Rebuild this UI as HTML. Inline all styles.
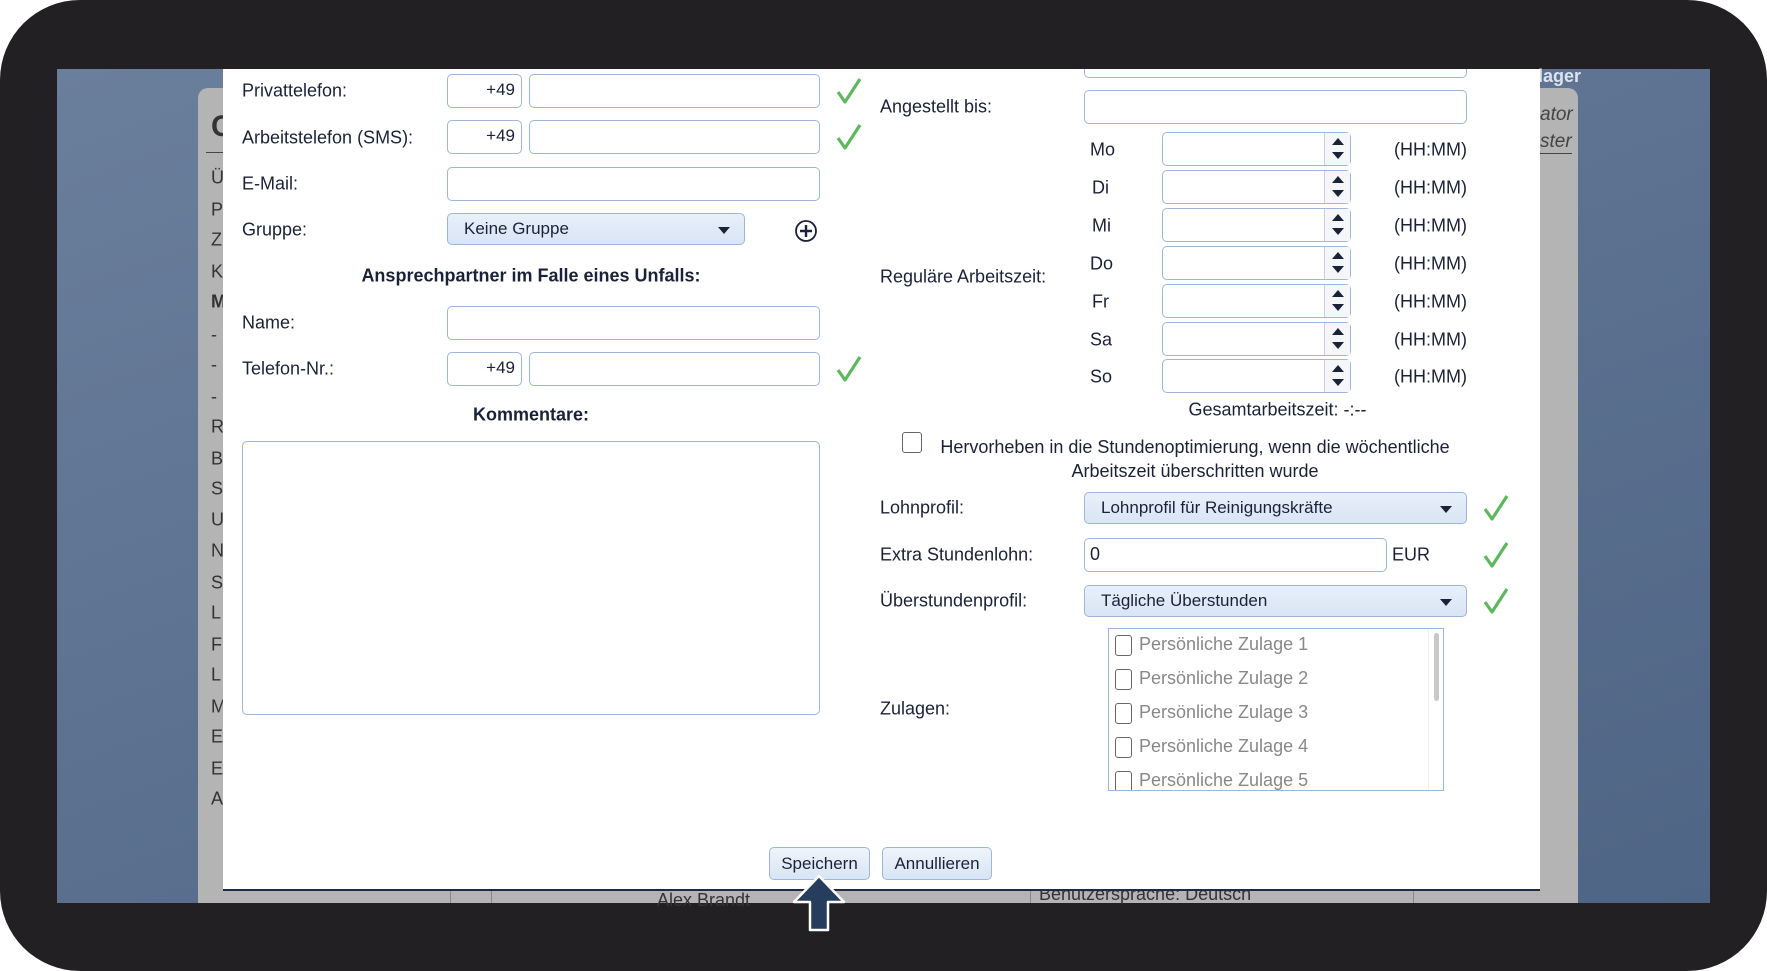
<!DOCTYPE html>
<html><head><meta charset="utf-8"><style>
*{box-sizing:border-box;margin:0;padding:0}
body{width:1767px;height:971px;background:#fff;overflow:hidden;position:relative;font-family:"Liberation Sans",sans-serif;color:#1a2238;font-size:18px}
.frame{position:absolute;left:0;top:0;width:1767px;height:971px;background:#222022;border-radius:80px}
.screen{position:absolute;left:57px;top:69px;width:1653px;height:834px;background:linear-gradient(160deg,#6a7f9c 0%,#5c7190 50%,#4f6585 100%)}
.gray{position:absolute;left:198px;top:88px;width:1380px;height:815px;background:#b4b4b4;border-radius:10px 10px 0 0}
.dlg{position:absolute;left:223px;top:69px;width:1317px;height:822px;background:#fff;border-bottom:2px solid #1e2a40}
.a{position:absolute;white-space:nowrap}
.l{position:absolute;white-space:nowrap;transform:translateY(-50%)}
.in{position:absolute;border:1px solid #9db6dc;border-radius:5px;background:#fff;height:34px}
.sel{position:absolute;border:1px solid #9db6dc;border-radius:5px;background:linear-gradient(#e8f0fa,#d8e5f4);height:32px;padding-left:16px;line-height:30px;font-size:17px}
.sel:after{content:"";position:absolute;right:14px;top:13px;border-left:6px solid transparent;border-right:6px solid transparent;border-top:7px solid #1a2238}
.ck{position:absolute;width:26px;height:28px}
.spin{position:absolute;border:1px solid #9db6dc;border-radius:5px;background:#fff;width:189px;height:34px}
.spin i{position:absolute;right:0;top:0;width:26px;height:32px;border-left:1px solid #ccd;background:#f4f6fa}
.spin i:before{content:"";position:absolute;left:7px;top:5px;border-left:6px solid transparent;border-right:6px solid transparent;border-bottom:7px solid #1a2238}
.spin i:after{content:"";position:absolute;left:7px;top:19px;border-left:6px solid transparent;border-right:6px solid transparent;border-top:7px solid #1a2238}
.btn{position:absolute;border:1px solid #9db6dc;border-radius:5px;background:linear-gradient(#eef4fb,#d8e5f4);height:33px;line-height:31px;text-align:center;font-size:17px}
.cb{position:absolute;width:17px;height:21px;border:1.5px solid #666;border-radius:3px;background:#fff}
.side{position:absolute;left:211px;color:#333;font-size:18px;transform:translateY(-50%)}
</style></head><body>
<div class="frame"></div>
<div class="screen"></div>
<div class="gray"></div>
<div class="side" style="top:127px;font-size:30px;font-weight:bold">C</div>
<div class="a" style="left:206px;top:152px;width:20px;border-top:1px solid #444"></div>
<div class="side" style="top:178px">Ü</div><div class="side" style="top:210px">P</div><div class="side" style="top:240px">Z</div><div class="side" style="top:272px">K</div><div class="side" style="top:302px;font-weight:bold">M</div><div class="side" style="top:335px">-</div><div class="side" style="top:365px">-</div><div class="side" style="top:397px">-</div><div class="side" style="top:427px">R</div><div class="side" style="top:459px">B</div><div class="side" style="top:489px">S</div><div class="side" style="top:520px">U</div><div class="side" style="top:551px">N</div><div class="side" style="top:583px">S</div><div class="side" style="top:613px">L</div><div class="side" style="top:645px">F</div><div class="side" style="top:675px">L</div><div class="side" style="top:707px">M</div><div class="side" style="top:737px">E</div><div class="side" style="top:769px">E</div><div class="side" style="top:799px">A</div>
<div class="a" style="left:1538px;top:66px;color:#dde3ee;font-weight:bold;font-size:18px">lager</div>
<div class="a" style="left:1540px;top:104px;color:#444;font-style:italic;font-size:19px">ator</div>
<div class="a" style="left:1540px;top:131px;color:#444;font-style:italic;font-size:19px;border-bottom:1px solid #444">ster</div>
<div class="a" style="left:657px;top:890px;color:#333;font-size:18px">Alex Brandt</div>
<div class="a" style="left:1039px;top:884px;color:#333;font-size:18px">Benutzersprache: Deutsch</div>
<div class="a" style="left:450px;top:891px;height:12px;border-left:1px solid #888"></div>
<div class="a" style="left:491px;top:891px;height:12px;border-left:1px solid #888"></div>
<div class="a" style="left:1030px;top:891px;height:12px;border-left:1px solid #888"></div>
<div class="a" style="left:1413px;top:891px;height:12px;border-left:1px solid #888"></div>
<div class="dlg"></div>

<div class="l" style="left:242px;top:91px">Privattelefon:</div>
<div class="in" style="left:447px;top:74px;width:75px;text-align:right;padding-right:6px;line-height:30px;font-size:17px">+49</div>
<div class="in" style="left:529px;top:74px;width:291px"></div>
<div class="l" style="left:242px;top:138px">Arbeitstelefon (SMS):</div>
<div class="in" style="left:447px;top:120px;width:75px;text-align:right;padding-right:6px;line-height:30px;font-size:17px">+49</div>
<div class="in" style="left:529px;top:120px;width:291px"></div>
<div class="l" style="left:242px;top:184px">E-Mail:</div>
<div class="in" style="left:447px;top:167px;width:373px"></div>
<div class="l" style="left:242px;top:230px">Gruppe:</div>
<div class="sel" style="left:447px;top:213px;width:298px">Keine Gruppe</div>
<svg class="a" style="left:794px;top:219px" width="24" height="24" viewBox="0 0 24 24"><circle cx="12" cy="12" r="10" fill="none" stroke="#1a2238" stroke-width="1.8"/><path d="M12 6v12M6 12h12" stroke="#1a2238" stroke-width="2.4"/></svg>
<div class="l" style="left:242px;top:276px;width:578px;text-align:center;font-weight:bold">Ansprechpartner im Falle eines Unfalls:</div>
<div class="l" style="left:242px;top:323px">Name:</div>
<div class="in" style="left:447px;top:306px;width:373px"></div>
<div class="l" style="left:242px;top:369px">Telefon-Nr.:</div>
<div class="in" style="left:447px;top:352px;width:75px;text-align:right;padding-right:6px;line-height:30px;font-size:17px">+49</div>
<div class="in" style="left:529px;top:352px;width:291px"></div>
<div class="l" style="left:242px;top:415px;width:578px;text-align:center;font-weight:bold">Kommentare:</div>
<div class="in" style="left:242px;top:441px;width:578px;height:274px"></div>

<div class="a" style="left:1080px;top:69px;width:400px;height:12px;overflow:hidden"><div class="in" style="left:4px;top:-25px;width:383px"></div></div>
<div class="l" style="left:880px;top:107px">Angestellt bis:</div>
<div class="in" style="left:1084px;top:90px;width:383px"></div>
<div class="l" style="left:880px;top:277px">Reguläre Arbeitszeit:</div>

<div class="l" style="left:1090px;top:150px">Mo</div><div class="spin" style="left:1162px;top:132px"><i></i></div><div class="l" style="left:1394px;top:150px">(HH:MM)</div>
<div class="l" style="left:1092px;top:188px">Di</div><div class="spin" style="left:1162px;top:170px"><i></i></div><div class="l" style="left:1394px;top:188px">(HH:MM)</div>
<div class="l" style="left:1092px;top:226px">Mi</div><div class="spin" style="left:1162px;top:208px"><i></i></div><div class="l" style="left:1394px;top:226px">(HH:MM)</div>
<div class="l" style="left:1090px;top:264px">Do</div><div class="spin" style="left:1162px;top:246px"><i></i></div><div class="l" style="left:1394px;top:264px">(HH:MM)</div>
<div class="l" style="left:1092px;top:302px">Fr</div><div class="spin" style="left:1162px;top:284px"><i></i></div><div class="l" style="left:1394px;top:302px">(HH:MM)</div>
<div class="l" style="left:1090px;top:340px">Sa</div><div class="spin" style="left:1162px;top:322px"><i></i></div><div class="l" style="left:1394px;top:340px">(HH:MM)</div>
<div class="l" style="left:1090px;top:377px">So</div><div class="spin" style="left:1162px;top:359px"><i></i></div><div class="l" style="left:1394px;top:377px">(HH:MM)</div>
<div class="l" style="left:1100px;top:410px;width:355px;text-align:center">Gesamtarbeitszeit: -:--</div>
<div class="cb" style="left:902px;top:432px;width:20px;height:21px"></div>
<div class="a" style="left:925px;top:435px;width:540px;text-align:center;line-height:24px">Hervorheben in die Stundenoptimierung, wenn die wöchentliche<br>Arbeitszeit überschritten wurde</div>
<div class="l" style="left:880px;top:508px">Lohnprofil:</div>
<div class="sel" style="left:1084px;top:492px;width:383px">Lohnprofil für Reinigungskräfte</div>
<div class="l" style="left:880px;top:555px">Extra Stundenlohn:</div>
<div class="in" style="left:1084px;top:538px;width:303px;padding-left:5px;line-height:31px">0</div>
<div class="l" style="left:1392px;top:555px">EUR</div>
<div class="l" style="left:880px;top:601px">Überstundenprofil:</div>
<div class="sel" style="left:1084px;top:585px;width:383px">Tägliche Überstunden</div>
<div class="l" style="left:880px;top:709px">Zulagen:</div>
<div class="a" style="left:1108px;top:628px;width:336px;height:163px;border:1px solid #9db6dc;overflow:hidden;background:#fff">
 <div class="a" style="right:4px;top:4px;width:5px;height:68px;background:#c8c8c8;border-radius:3px"></div>
 <div class="a" style="right:14px;top:0;height:163px;border-left:1px solid #eee"></div>
 <div class="cb" style="left:6px;top:6px"></div><div class="a" style="left:30px;top:5px;color:#888">Persönliche Zulage 1</div>
 <div class="cb" style="left:6px;top:40px"></div><div class="a" style="left:30px;top:39px;color:#888">Persönliche Zulage 2</div>
 <div class="cb" style="left:6px;top:74px"></div><div class="a" style="left:30px;top:73px;color:#888">Persönliche Zulage 3</div>
 <div class="cb" style="left:6px;top:108px"></div><div class="a" style="left:30px;top:107px;color:#888">Persönliche Zulage 4</div>
 <div class="cb" style="left:6px;top:142px"></div><div class="a" style="left:30px;top:141px;color:#888">Persönliche Zulage 5</div>
</div>

<svg width="0" height="0" style="position:absolute"><defs><path id="ck" d="M2 15 L9 25 L24 2" fill="none" stroke="#5cb85c" stroke-width="3.2" stroke-linejoin="round"/></defs></svg>
<svg class="ck" style="left:836px;top:77px" viewBox="0 0 26 28"><use href="#ck"/></svg>
<svg class="ck" style="left:836px;top:123px" viewBox="0 0 26 28"><use href="#ck"/></svg>
<svg class="ck" style="left:836px;top:355px" viewBox="0 0 26 28"><use href="#ck"/></svg>
<svg class="ck" style="left:1483px;top:494px" viewBox="0 0 26 28"><use href="#ck"/></svg>
<svg class="ck" style="left:1483px;top:541px" viewBox="0 0 26 28"><use href="#ck"/></svg>
<svg class="ck" style="left:1483px;top:587px" viewBox="0 0 26 28"><use href="#ck"/></svg>

<div class="btn" style="left:769px;top:847px;width:101px">Speichern</div>
<div class="btn" style="left:882px;top:847px;width:110px">Annullieren</div>
<svg class="a" style="left:790px;top:873px" width="58" height="60" viewBox="0 0 58 60"><path d="M29 3 L54 29 L38 29 L38 57 L20 57 L20 29 L4 29 Z" fill="#263d5e" stroke="#fff" stroke-width="2.5" stroke-linejoin="round"/></svg>
</body></html>
